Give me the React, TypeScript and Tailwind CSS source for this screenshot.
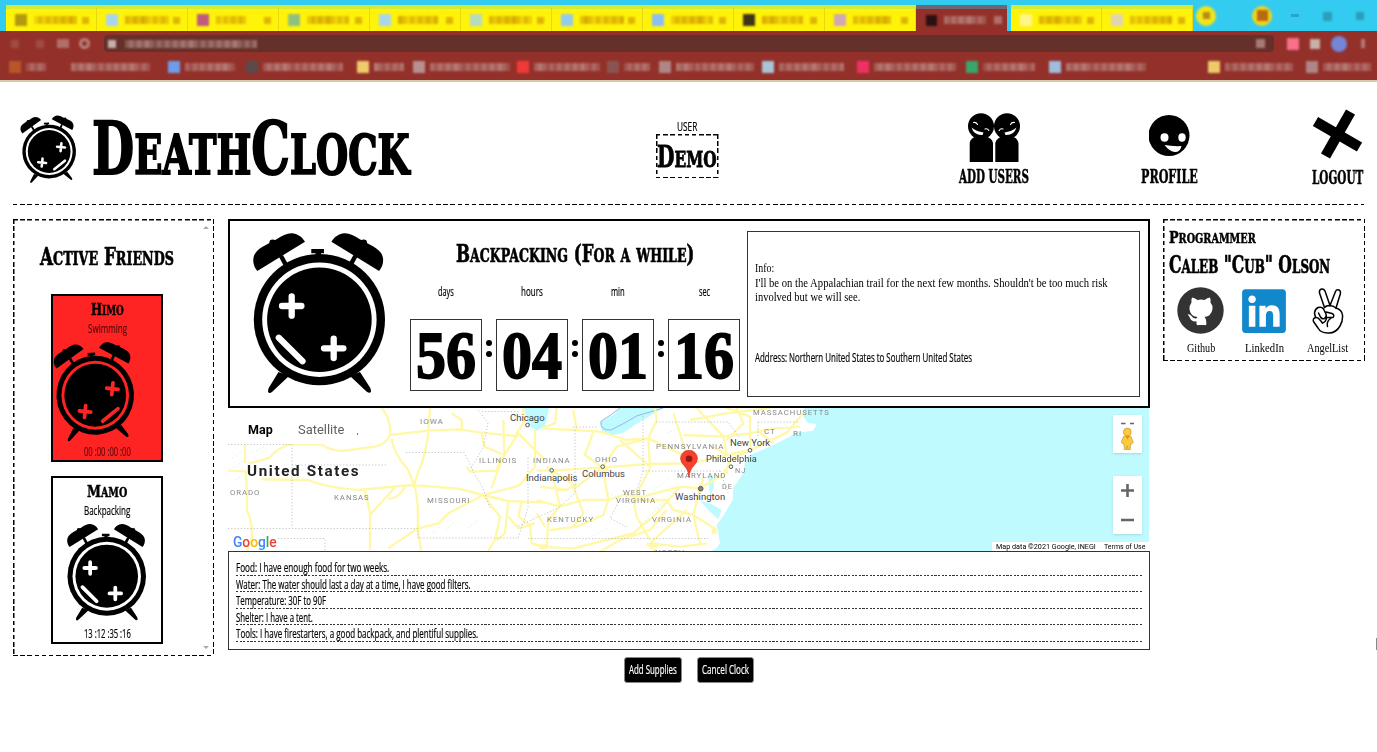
import React, { useLayoutEffect, useRef, useState } from "react";
import { FaLinkedin } from "react-icons/fa";

const slab = "font-['DejaVu_Serif','Liberation_Serif',serif] font-bold [-webkit-text-stroke:0.028em_currentColor]";
const body = "font-['Open_Sans','Liberation_Sans',sans-serif] [-webkit-text-stroke:0.2px_currentColor]";
const book = "font-['Liberation_Serif',serif]";

/* Condenses a line of text to a given width. */
function Fit({ w, className = "", children }: { w: number; className?: string; children: React.ReactNode }) {
  const ref = useRef<HTMLSpanElement>(null);
  const [scale, setScale] = useState(1);
  useLayoutEffect(() => {
    if (ref.current) setScale(w / ref.current.offsetWidth);
  }, [w]);
  return (
    <div className={"shrink-0 whitespace-nowrap " + className} style={{ width: w }}>
      <span ref={ref} className="inline-block origin-left" style={{ transform: `scaleX(${scale})` }}>
        {children}
      </span>
    </div>
  );
}

/* Capitals with the lower-case letters set as smaller capitals. */
function Caps({ text }: { text: string }) {
  const runs = text.match(/[a-z]+|[^a-z]+/g) || [];
  return (
    <>
      {runs.map((r, i) =>
        /[a-z]/.test(r) ? (
          <span key={i} className="text-[0.76em] leading-none uppercase">{r}</span>
        ) : (
          <span key={i}>{r}</span>
        )
      )}
    </>
  );
}

const dashBox =
  "bg-no-repeat bg-[repeating-linear-gradient(90deg,#000_0_4.5px,transparent_4.5px_7.17px),repeating-linear-gradient(90deg,#000_0_4.5px,transparent_4.5px_7.17px),repeating-linear-gradient(180deg,#000_0_4.5px,transparent_4.5px_7.17px),repeating-linear-gradient(180deg,#000_0_4.5px,transparent_4.5px_7.17px)] [background-size:100%_1.5px,100%_1.5px,1.5px_100%,1.5px_100%] [background-position:0_0,0_100%,0_0,100%_0]";

function Bell() {
  return (
    <g>
      <path d="M4.3 38C1.5 34.500 0 31 .3 26C.6 21 4 17 10 13.500L24 6C29 2.500 34 0 39 .2C44 .5 49 3.500 52 8.700Z" />
      <circle cx="19.700" cy="10" r="3.400" />
      <path d="M28 23L34 34" stroke="#000" strokeWidth="4.500" />
    </g>
  );
}

function Clock({ paper, className, flip = false, body: b = 0, face = 0 }: { paper: string; className: string; flip?: boolean; body?: number; face?: number }) {
  return (
    <svg viewBox="0 0 132 161" className={"block shrink-0 overflow-visible " + className} preserveAspectRatio="none">
      <g transform={`rotate(${b} 66 87)`}>
        <Bell />
        <g transform="translate(130.400 0) scale(-1 1)"><Bell /></g>
        <path d="M58.300 16H71V20.300H58.300ZM62.500 19H68V24H62.500Z" />
        <path d="M25.500 139L36 143L19.500 158.500Q16 161.500 15 158.500Q15 156 16 154.500Z" />
        <path d="M107 139L97 143L113.500 158.500Q117 161 118 158.500Q118 156 117 154.500Z" />
        <circle cx="66.400" cy="86.700" r="65.600" />
      </g>
      <circle cx="66.400" cy="86.700" r="57.200" fill={paper} />
      <circle cx="66.400" cy="86.700" r="52.300" />
      <g transform={`rotate(${face} 66.400 86.700) ${flip ? "translate(132.800 0) scale(-1 1)" : ""}`} stroke={paper} strokeWidth="6.300" strokeLinecap="round">
        <path d="M29 73H48.400M38.700 63.300V82.700M71 115.300H90.400M80.700 105.600V125M25.800 104.800L49.500 128.200" />
      </g>
    </svg>
  );
}

/* Obscured browser text: a strip of soft cells. */
function Mosaic({ w, tone, seed }: { w: number; tone: "gold" | "rose"; seed: number }) {
  const n = Math.max(2, Math.round(w / 4));
  return (
    <div className="flex h-[8px] shrink-0 overflow-hidden blur-[1px]" style={{ width: w }}>
      {Array.from({ length: n }, (_, i) => {
        const v = ((i * 7 + seed * 13) * 37) % 11;
        return (
          <div
            key={i}
            className={tone === "gold" ? "h-full flex-1 bg-[#c98a00]" : "h-full flex-1 bg-[#c39a95]"}
            style={{ opacity: 0.3 + v * 0.04 }}
          />
        );
      })}
    </div>
  );
}

const tabs = [
  { c: "bg-[#b29a10]", w: 43 },
  { c: "bg-[#a9d5ee]", w: 44 },
  { c: "bg-[#c05a80]", w: 30 },
  { c: "bg-[#8fc080]", w: 42 },
  { c: "bg-[#a9d5ee]", w: 40 },
  { c: "bg-[#b5dbc0]", w: 43 },
  { c: "bg-[#93cbee]", w: 44 },
  { c: "bg-[#8abef5]", w: 42 },
  { c: "bg-[#3d3515]", w: 41 },
  { c: "bg-[#d0a8b5]", w: 38 },
];

const marks = [
  { x: 9, c: "bg-[#b8552a]", w: 20 },
  { x: 54, c: "bg-transparent", w: 79 },
  { x: 168, c: "bg-[#6f9cea]", w: 50 },
  { x: 246, c: "bg-[#5a4a4a]", w: 80 },
  { x: 357, c: "bg-[#eecb6a]", w: 30 },
  { x: 413, c: "bg-[#b89090]", w: 80 },
  { x: 517, c: "bg-[#f03a3a]", w: 66 },
  { x: 607, c: "bg-[#8a5550]", w: 26 },
  { x: 659, c: "bg-[#b08585]", w: 78 },
  { x: 762, c: "bg-[#a9c5d5]", w: 65 },
  { x: 857, c: "bg-[#ef3060]", w: 82 },
  { x: 966, c: "bg-[#3aa66a]", w: 52 },
  { x: 1049, c: "bg-[#a0bde0]", w: 80 },
  { x: 1208, c: "bg-[#eecb6a]", w: 68 },
  { x: 1306, c: "bg-[#b08585]", w: 48 },
];

function Tab({ c, w, i }: { c: string; w: number; i: number }) {
  return (
    <div className="flex h-[26px] w-[91px] shrink-0 items-center border-t-4 border-r border-t-[#d4ec38] border-r-[#e8d810] bg-[#fff30a] pl-[9px]">
      <div className={"mr-[7px] size-[12px] blur-[1px] " + c} />
      <Mosaic w={w} tone="gold" seed={i} />
      <div className="mr-[7px] ml-auto size-[7px] bg-[#c98a00]/60 blur-[1px]" />
    </div>
  );
}

function Browser() {
  return (
    <div className="h-[82px] overflow-hidden bg-[#94302a]">
      <div className="flex h-[31px] items-end bg-[#33ccf0] pl-[6px]">
        {tabs.map((t, i) => <Tab key={i} c={t.c} w={t.w} i={i} />)}
        <div className="flex h-[26px] w-[91px] shrink-0 items-center border-t-4 border-t-[#6f6870] bg-[#94302a] pl-[10px]">
          <div className="mr-[7px] size-[11px] bg-[#2a1010] blur-[1px]" />
          <Mosaic w={42} tone="rose" seed={5} />
          <div className="ml-[8px] size-[8px] bg-[#c39a95]/60 blur-[1px]" />
        </div>
        <div className="ml-[4px] flex">
          <Tab c="bg-[#fff68a]" w={43} i={12} />
          <Tab c="bg-[#e0d5b0]" w={42} i={13} />
        </div>
        <div className="ml-[3px] flex size-[20px] shrink-0 items-center justify-center self-center rounded-full bg-[#f2e41a] blur-[1px]"><div className="size-[7px] bg-[#b88a10]" /></div>
        <div className="ml-[36px] flex size-[20px] shrink-0 items-center justify-center self-center rounded-full bg-[#f2d41a] blur-[1px]"><div className="size-[11px] bg-[#b86a10]" /></div>
        <div className="mb-[14px] ml-[19px] h-[3px] w-[8px] bg-[#2794ab]/70 blur-[0.5px]" />
        <div className="mb-[10px] ml-[24px] size-[9px] bg-[#2794ab]/80 blur-[1px]" />
        <div className="mb-[11px] ml-[24px] size-[8px] bg-[#2794ab]/80 blur-[1px]" />
      </div>
      <div className="flex h-[25px] items-center pl-[11px]">
        <div className="h-[8px] w-[8px] bg-[#c39a95]/25 blur-[1px]" />
        <div className="ml-[17px] h-[8px] w-[8px] bg-[#c39a95]/25 blur-[1px]" />
        <div className="ml-[13px] h-[9px] w-[12px] bg-[#c39a95]/60 blur-[1px]" />
        <div className="ml-[10px] size-[11px] rounded-full border-3 border-[#b8827c] blur-[1px]" />
        <div className="ml-[14px] flex h-[17px] w-[1170px] items-center rounded-sm bg-[#66302a] pl-[4px]">
          <div className="size-[8px] bg-[#e0cfcc]/80 blur-[1px]" />
          <div className="w-[9px]" />
          <Mosaic w={132} tone="rose" seed={3} />
          <div className="mr-[9px] ml-auto size-[9px] bg-[#c39a95]/70 blur-[1px]" />
        </div>
        <div className="ml-[13px] size-[12px] bg-[#f8708a] blur-[1px]" />
        <div className="ml-[11px] size-[10px] bg-[#c9b0a8] blur-[1px]" />
        <div className="ml-[11px] size-[16px] rounded-full bg-[#7585d8] blur-[1px]" />
        <div className="ml-[14px] h-[9px] w-[4px] bg-[#c39a95]/70 blur-[1px]" />
      </div>
      <div className="relative h-[24px]">
        {marks.map((m, i) => (
          <div key={i} className="absolute top-[5px] flex items-center" style={{ left: m.x }}>
            <div className={"mr-[5px] size-[12px] blur-[1px] " + m.c} />
            <Mosaic w={m.w} tone="rose" seed={i} />
          </div>
        ))}
      </div>
      <div className="h-[2px] bg-[#d8c8ac]" />
    </div>
  );
}

function Header() {
  return (
    <header className="mx-[13px] flex h-[123px] items-start bg-[repeating-linear-gradient(90deg,#000_0_4.5px,transparent_4.5px_7.17px)] bg-bottom bg-no-repeat [background-size:100%_1.5px]">
      <Clock paper="#fff" className="mt-[34px] ml-[9px] h-[66px] w-[54px]" flip body={-4} face={6} />
      <Fit w={318} className={"mt-[37px] ml-[16px] text-[72px] leading-[60px] " + slab}><Caps text="DeathClock" /></Fit>
      <div className="mt-[37px] ml-[246px] flex w-[62px] shrink-0 flex-col items-center">
        <Fit w={20} className={"text-[12px] leading-[15px] " + body}>USER</Fit>
        <div className={"flex h-[44px] w-[63px] items-center justify-center " + dashBox}>
          <Fit w={60} className={"pt-[2px] text-[30px] leading-[40px] " + slab}><Caps text="Demo" /></Fit>
        </div>
      </div>
      <div className="mt-[31px] ml-[241px] flex w-[70px] shrink-0 flex-col items-center">
        <svg viewBox="0 0 52 49" className="h-[49px] w-[52px]">
          <circle cx="13" cy="13.300" r="13" />
          <circle cx="39" cy="13.300" r="13" />
          <path d="M1.700 49V30Q2.500 24.500 9 23.500H17Q24 24.500 25 30V49ZM27.300 49V30Q28.500 24.500 35 23.500H43Q49.500 24.500 50.500 30V49Z" />
          <g fill="#fff">
            <path d="M3.500 14.500Q8 18.500 15.500 19.500L14.500 22Q6 22.500 3.500 14.500Z" />
            <path d="M48.500 14.500Q44 18.500 36.500 19.500L37.500 22Q46 22.500 48.500 14.500Z" />
          </g>
          <g fill="none" stroke="#fff" strokeWidth="1.100" strokeLinecap="round">
            <path d="M5.500 9.500Q8 8.800 9.500 11.500M17 16Q19.500 15 20.800 17.500M46.500 9.500Q44 8.800 42.500 11.500M35 16Q32.500 15 31.200 17.500" />
          </g>
        </svg>
        <Fit w={70} className={"mt-[5px] text-[18px] leading-[20px] " + slab}>ADD USERS</Fit>
      </div>
      <div className="mt-[33px] ml-[112px] flex w-[57px] shrink-0 flex-col items-center">
        <svg viewBox="0 0 42 42" className="h-[42px] w-[42px]">
          <circle cx="20" cy="20.500" r="20.500" />
          <ellipse cx="15.500" cy="22.500" rx="4" ry="4.200" fill="#fff" />
          <ellipse cx="33" cy="22.500" rx="3.700" ry="4.200" fill="#fff" />
          <path d="M15.500 30Q24 31.500 32.500 31Q31 37.500 25.500 37Q20 36 15.500 30Z" fill="#fff" />
        </svg>
        <Fit w={57} className={"mt-[10px] text-[18px] leading-[20px] " + slab}>PROFILE</Fit>
      </div>
      <div className="mt-[27px] ml-[114px] flex w-[51px] shrink-0 flex-col items-center">
        <svg viewBox="0 0 51 51" className="h-[51px] w-[51px] overflow-visible" stroke="#000" strokeWidth="10.400">
          <path d="M38.500 3.000L13.500 47" />
          <path d="M3.500 12.500L47.500 38" />
        </svg>
        <Fit w={51} className={"mt-[8px] text-[18px] leading-[20px] " + slab}>LOGOUT</Fit>
      </div>
    </header>
  );
}

function Friends() {
  return (
    <aside className={"flex h-[437px] w-[201px] shrink-0 justify-between " + dashBox}>
      <div className="ml-[27px] w-[134px]">
        <Fit w={134} className={"mt-[24px] text-[24px] leading-[28px] " + slab}><Caps text="Active Friends" /></Fit>
        <div className="mt-[23px] ml-[11px] flex h-[168px] w-[112px] flex-col items-center border-2 border-black bg-[#ff2424]">
          <Fit w={33} className={"mt-[5px] text-[17px] leading-[16px] " + slab}><Caps text="Himo" /></Fit>
          <Fit w={39} className={"mt-[3px] text-[12px] leading-[16px] text-[#5a0a0a] " + body}>Swimming</Fit>
          <Clock paper="#ff2424" className="mt-[6px] ml-[3px] h-[97px] w-[78px] self-start" flip body={-4} face={6} />
          <Fit w={47} className={"mt-[4px] text-[12px] leading-[16px] text-[#5a0a0a] " + body}>00 :00 :00 :00</Fit>
        </div>
        <div className="mt-[14px] ml-[11px] flex h-[168px] w-[112px] flex-col items-center border-2 border-black">
          <Fit w={40} className={"mt-[5px] text-[17px] leading-[16px] " + slab}><Caps text="Mamo" /></Fit>
          <Fit w={46} className={"mt-[3px] text-[12px] leading-[16px] " + body}>Backpacking</Fit>
          <Clock paper="#fff" className="mt-[5px] mr-[2px] h-[97px] w-[79px]" />
          <Fit w={47} className={"mt-[5px] text-[12px] leading-[16px] " + body}>13 :12 :35 :16</Fit>
        </div>
      </div>
      <div className="mr-[5px] flex w-[6px] flex-col justify-between py-[6px]">
        <svg viewBox="0 0 6 4" className="h-[4px] w-[6px]" fill="#aaa"><path d="M0 4L3 1L6 4Z" /></svg>
        <svg viewBox="0 0 6 4" className="h-[4px] w-[6px]" fill="#aaa"><path d="M0 0L3 3L6 0Z" /></svg>
      </div>
    </aside>
  );
}

function Unit({ label, w, value }: { label: string; w: number; value: string }) {
  return (
    <div className="flex w-[72px] flex-col items-center">
      <Fit w={w} className={"text-[12px] leading-[16px] " + body}>{label}</Fit>
      <div className="mt-[19px] flex h-[72px] w-[72px] items-center justify-center border border-[#333]">
        <Fit w={60} className="text-[68px] leading-[72px] font-bold font-['Liberation_Serif',serif] [-webkit-text-stroke:1.800px_#000]">{value}</Fit>
      </div>
    </div>
  );
}

function Colon() {
  return (
    <div className="mt-[56px] flex w-[14px] flex-col items-center gap-[5px]">
      <div className="size-[6px] rounded-full bg-black" />
      <div className="size-[6px] rounded-full bg-black" />
    </div>
  );
}

function Label({ x, y, w, size = "text-[8px]", className = "text-[#8a8a8a]", children }: { x: number; y: number; w: number; size?: string; className?: string; children: string }) {
  return (
    <div className="absolute" style={{ left: x - 228, top: y - 408 - 7 }}>
      <Fit w={w} className={"leading-[14px] font-['Roboto',sans-serif] " + size + " " + className}>{children}</Fit>
    </div>
  );
}

const city = "text-[#444]";
const state = "text-[#888] tracking-[1px]";

function MapPanel() {
  return (
    <div className="relative h-[143px] w-[921px] overflow-hidden bg-white">
      <svg viewBox="0 0 921 143" className="block h-[143px] w-[921px]" fill="none">
        <g transform="translate(312 -8) scale(.33333)">
          <path fill="#bffaff" d="M795 20L790 50L805 70L830 72L820 92L770 98L735 118L690 140L630 165L615 178L612 215L590 250L580 262L578 300L548 350L530 375L535 400L540 430L530 445L495 462H1840V20Z" />
          <path fill="#bffaff" d="M240 20L225 42L180 66L185 92L212 107L250 98L290 72L375 20ZM-50 20L-32 80L-8 92L15 78L28 20ZM505 235L520 225L522 262L510 290ZM480 302L515 312L545 330L535 358L510 335Z" />
          <path stroke="#98b5ea" strokeWidth="3" d="M240 24Q215 44 183 64Q180 92 213 90Q250 72 290 48L370 24" />
        </g>
        <g transform="translate(-3 -8) scale(.33333)" stroke="#fff8a8" strokeWidth="7" strokeLinejoin="round">
          <path d="M470 24Q500 60 495 105Q480 135 450 140L350 153Q310 150 290 133H190Q150 150 135 172Q100 185 70 190M10 212L62 214Q68 300 65 330Q85 370 80 420L66 452M60 130V190M495 105L610 92L700 88L770 98L870 108L900 60L893 24M615 24L610 92Q605 160 580 215L567 255M500 115Q505 160 550 210L567 255M110 238L250 240Q300 262 400 270L560 255L700 266L775 285L850 303L960 308M420 270L435 340V450M510 262L435 345M540 262Q520 295 490 297M567 255Q582 300 578 385L588 452M490 445L578 385L640 370L670 340L775 285L880 258L930 200L930 90M775 285Q800 320 825 350L810 420L790 452M835 60L838 165L815 220L800 265M725 200L735 215L815 212L828 170M680 40L710 60V88M770 98L778 140L838 165L880 100L960 180M850 303L840 400L815 420M850 350L880 385L930 370M890 306L880 350L915 375L920 430L950 440M935 340L960 380" />
        </g>
        <g transform="translate(312 -8) scale(.33333)" stroke="#fff8a8" strokeWidth="7" strokeLinejoin="round">
          <path d="M-10 212L35 212L188 202L330 192L450 190L560 165L630 150L740 98L790 40M5 85L100 90L180 95L260 120L325 115L330 205L280 300L290 350L330 420M160 95L135 165L188 202L110 260L20 200M188 202L230 140L325 115L420 160L440 170M325 115L350 60L345 24M240 120L330 200M400 40L420 100L440 170M430 105L550 110L630 100L700 85L780 80M470 24L550 110L560 165M560 24L630 50V150M650 90L700 130M450 60L560 40L690 24M188 202L205 300L190 345L110 380L30 390M205 300L250 285L310 290L420 260L480 265L555 220L570 180L630 150M35 212L60 320L25 360L20 440M-10 300L60 320L130 300L205 300M0 260L80 270L110 250M280 300L380 300L400 330L460 345L480 430M380 330L330 390L240 420L180 455M480 265L460 345L530 390M420 260L350 340L280 400L200 420L100 445L0 440M480 265L490 235M440 330L330 430L420 440L500 430M320 430L350 455M590 24L610 70L560 120M520 140L560 165M100 30L110 90M50 24L45 70L5 85M100 260L130 340L100 380" />
          <g strokeWidth="14"><path d="M-2 440H20M330 435H355M515 395H530M475 263H490M550 215H565M185 207H205" /></g>
        </g>
        <g stroke="#b5b5b5" strokeWidth=".8" strokeDasharray="1.200 2">
          <path d="M0 36.500H64V120M0 120.500H190V130H290M50 130.500H97V143M64 57H160M178 44.500H236L245 62M250 2L260 15L255 40L243 60L255 80L262 100M254 3.500H290M300 50V100L290 130M300 130.500H480M347 22V85M345 19H370M415 8V63H492M428 14H500L512 30M415 63L410 80L390 95L382 110L400 120M492 63L500 85M530 14H570M530 14V30M290 118L330 100L347 85" />
        </g>
        <g stroke="#bfeecb" strokeWidth=".8" strokeDasharray="1 2.500">
          <path d="M4 50L16 42M5 60L17 52M8 72L14 68M25 44L38 38M218 122L226 114M240 120L250 112M205 125L212 118M440 70L420 88M450 75L425 105M435 95L410 120M380 120L350 135M440 25L452 20M380 85L400 95" />
        </g>
        <g fill="#fff" stroke="#555" strokeWidth="1">
          <circle cx="299.500" cy="17" r="1.800" /><circle cx="323.700" cy="62.300" r="1.800" /><circle cx="374.700" cy="58.700" r="1.800" /><circle cx="522" cy="42.300" r="1.800" /><circle cx="503" cy="58.700" r="1.800" /><circle cx="472.700" cy="80.700" r="2.300" fill="#888" />
        </g>
      </svg>
      <div className="absolute top-[5px] left-[10px] h-[31px] w-[119px] bg-white" />
      <div className="absolute top-[25px] left-[129px] h-[2px] w-px bg-[#777]" />
      <Label x={248} y={429} w={25} size="text-[13.500px]" className="text-black font-bold">Map</Label>
      <Label x={298} y={429} w={46} size="text-[13.500px]" className="text-[#606060]">Satellite</Label>
      <Label x={247} y={471} w={113} size="text-[14px]" className="text-[#222] font-bold tracking-[1.500px]">United States</Label>
      <Label x={420} y={422} w={24} className={state}>IOWA</Label>
      <Label x={479} y={461} w={38} className={state}>ILLINOIS</Label>
      <Label x={533} y={461} w={38} className={state}>INDIANA</Label>
      <Label x={595} y={460} w={23} className={state}>OHIO</Label>
      <Label x={230} y={493} w={30} className={state}>ORADO</Label>
      <Label x={334} y={498} w={36} className={state}>KANSAS</Label>
      <Label x={427} y={501} w={43} className={state}>MISSOURI</Label>
      <Label x={547} y={520} w={47} className={state}>KENTUCKY</Label>
      <Label x={623} y={493} w={24} className={state}>WEST</Label>
      <Label x={616} y={501} w={40} className={state}>VIRGINIA</Label>
      <Label x={652} y={520} w={40} className={state}>VIRGINIA</Label>
      <Label x={655} y={553} w={30} className={state}>NORTH</Label>
      <Label x={656} y={447} w={68} className={state}>PENNSYLVANIA</Label>
      <Label x={677} y={476} w={49} className={state}>MARYLAND</Label>
      <Label x={753} y={413} w={77} className={state}>MASSACHUSETTS</Label>
      <Label x={764} y={432} w={12} className={state}>CT</Label>
      <Label x={793} y={434} w={9} className={state}>RI</Label>
      <Label x={735} y={471} w={11} className={state}>NJ</Label>
      <Label x={722} y={487} w={11} className={state}>DE</Label>
      <Label x={510} y={418} w={35} size="text-[9.500px]" className={city}>Chicago</Label>
      <Label x={526} y={478} w={51} size="text-[9.500px]" className={city}>Indianapolis</Label>
      <Label x={582} y={474} w={43} size="text-[9.500px]" className={city}>Columbus</Label>
      <Label x={730} y={443} w={40} size="text-[9.500px]" className={city}>New York</Label>
      <Label x={706} y={459} w={51} size="text-[9.500px]" className={city}>Philadelphia</Label>
      <Label x={675} y={497} w={50} size="text-[9.500px]" className={city}>Washington</Label>
      <svg viewBox="0 0 18 28" className="absolute top-[42px] left-[452px] h-[28px] w-[18px]">
        <path d="M9 27.500Q8.600 20 4 15.500Q.5 12 .5 8.500A8.500 8.300 0 0 1 17.500 8.500Q17.500 12 14 15.500Q9.400 20 9 27.500Z" fill="#f8402f" stroke="#d02818" strokeWidth=".6" />
        <circle cx="9" cy="8.700" r="3.300" fill="#8c1c14" />
      </svg>
      <div className="absolute top-[125px] left-[5px]">
        <Fit w={44} className="text-[15px] leading-[18px] font-medium font-['Roboto',sans-serif]">
          <span className="text-[#4285f4]">G</span><span className="text-[#ea4335]">o</span><span className="text-[#fbbc05]">o</span><span className="text-[#4285f4]">g</span><span className="text-[#34a853]">l</span><span className="text-[#ea4335]">e</span>
        </Fit>
      </div>
      <svg viewBox="0 0 29 38" className="absolute top-[7px] left-[885px] h-[38px] w-[29px] bg-white shadow-sm">
        <path d="M8 8.500H12.500M17 8.500H21" stroke="#666" strokeWidth="1.300" />
        <g fill="#fbcb3a" stroke="#b98a30" strokeWidth=".6">
          <path d="M10.500 21.500Q14.500 19.500 18 21.500L20.300 27.500L18.500 29L17.500 29L17.300 34.500H14.700V31H14V34.500H11.300L11 29L10.200 29L8.300 27.500Z" />
          <circle cx="14.300" cy="17" r="3.900" />
        </g>
        <path d="M12.500 21H16.500L14.500 24.500Z" fill="#ee8822" />
      </svg>
      <svg viewBox="0 0 29 58" className="absolute top-[68px] left-[885px] h-[58px] w-[29px] bg-white shadow-sm">
        <path d="M8 14.500H21M14.500 8V21M8 44H21" stroke="#666" strokeWidth="2.600" />
      </svg>
      <div className="absolute right-0 bottom-0 flex h-[9px] w-[157px] items-center justify-between bg-white pr-[4px] pl-[4px] text-[7.500px] leading-[9px] text-black font-['Roboto',sans-serif]">
        <Fit w={100}>Map data ©2021 Google, INEGI</Fit>
        <Fit w={41}>Terms of Use</Fit>
      </div>
    </div>
  );
}

const supplies = [
  { t: "Food: I have enough food for two weeks.", w: 153 },
  { t: "Water: The water should last a day at a time, I have good filters.", w: 235 },
  { t: "Temperature: 30F to 90F", w: 90 },
  { t: "Shelter: I have a tent.", w: 77 },
  { t: "Tools: I have firestarters, a good backpack, and plentiful supplies.", w: 242 },
];

function Center() {
  return (
    <section className="ml-[14px] flex w-[922px] shrink-0 flex-col">
      <div className="flex h-[189px] border-2 border-black">
        <Clock paper="#fff" className="mt-[12px] ml-[23px] h-[161px] w-[132px]" />
        <div className="ml-[25px] w-[330px] shrink-0">
          <Fit w={238} className={"mt-[19px] ml-[46px] text-[24px] leading-[28px] " + slab}><Caps text="Backpacking (For a while)" /></Fit>
          <div className="mt-[16px] flex">
            <Unit label="days" w={16} value="56" />
            <Colon />
            <Unit label="hours" w={22} value="04" />
            <Colon />
            <Unit label="min" w={14} value="01" />
            <Colon />
            <Unit label="sec" w={11} value="16" />
          </div>
        </div>
        <div className="mt-[10px] ml-[7px] h-[166px] w-[393px] shrink-0 border border-[#333] pt-[29px] pl-[7px]">
          <div className={"text-[12px] leading-[14.500px] " + book}>
            <Fit w={19}>Info:</Fit>
            <Fit w={353}>I'll be on the Appalachian trail for the next few months. Shouldn't be too much risk</Fit>
            <Fit w={105}>involved but we will see.</Fit>
          </div>
          <Fit w={217} className={"mt-[44px] text-[12px] leading-[18px] " + body}>Address: Northern United States to Southern United States</Fit>
        </div>
      </div>
      <MapPanel />
      <div className="h-[99px] border border-[#333] px-[7px] pt-[7px]">
        {supplies.map((s) => (
          <div key={s.t} className="h-[16.550px] bg-[repeating-linear-gradient(90deg,#333_0_2.2px,transparent_2.2px_3.6px)] bg-bottom bg-no-repeat [background-size:100%_1px]">
            <Fit w={s.w} className={"text-[12px] leading-[17px] " + body}>{s.t}</Fit>
          </div>
        ))}
      </div>
      <div className="mt-[7px] flex gap-[15px] pl-[396px]">
        <button className="flex h-[26px] w-[58px] items-center justify-center rounded-[3px] border border-[#888] bg-black text-white">
          <Fit w={48} className={"text-[12px] leading-[16px] " + body}>Add Supplies</Fit>
        </button>
        <button className="flex h-[26px] w-[57px] items-center justify-center rounded-[3px] border border-[#888] bg-black text-white">
          <Fit w={47} className={"text-[12px] leading-[16px] " + body}>Cancel Clock</Fit>
        </button>
      </div>
    </section>
  );
}

function Programmer() {
  return (
    <aside className={"ml-[13px] h-[142px] w-[202px] shrink-0 " + dashBox}>
      <div className="pt-[8px] pl-[6px]">
        <Fit w={87} className={"text-[17px] leading-[20px] " + slab}><Caps text="Programmer" /></Fit>
        <Fit w={161} className={"mt-[4px] text-[25px] leading-[28px] " + slab}><Caps text={'Caleb "Cub" Olson'} /></Fit>
        <div className="mt-[8px] flex">
          <div className="flex w-[63px] flex-col items-center">
            <svg viewBox="0 0 47 47" className="size-[47px]">
              <circle cx="23.500" cy="23.500" r="23.200" fill="#333" />
              <path fill="#fff" d="M15 10.500Q17.500 10.500 20.500 13Q23.500 12.200 27.500 13Q30.500 10.500 33 10.500Q34 13 33.500 15.500Q36 18.500 35.500 22Q34.500 29 27.500 30Q29.500 32 29.300 35V37.500Q29 38.500 27 38H22Q19.500 38.500 19.500 37V34.300Q14.500 35 13 31Q12 28.500 10.700 27.500Q12.500 26.500 14.500 29Q17 32.500 19.700 31.300Q19.800 30.500 20.500 30Q13 29 12.500 22Q12.300 18.500 14.500 15.500Q14 13 15 10.500Z" />
            </svg>
            <Fit w={28} className={"mt-[7px] text-[12px] leading-[14px] " + book}>Github</Fit>
          </div>
          <div className="flex w-[64px] flex-col items-center">
            <FaLinkedin className="-mt-[1px] h-[50px] w-[50px] text-[#1188cc]" />
            <Fit w={39} className={"mt-[5px] text-[12px] leading-[14px] " + book}>LinkedIn</Fit>
          </div>
          <div className="flex w-[63px] flex-col items-center">
            <svg viewBox="0 0 32 46" className="mt-[1px] h-[46px] w-[32px]" fill="none" stroke="#000" strokeWidth="1.500" strokeLinecap="round" strokeLinejoin="round">
              <path d="M12.500 19.500L7.500 5Q7 1.500 9.500 1Q12 .7 13 3L18 17.500M18 17.500L23.500 3.500Q24.500 1 27 2Q29 3 28.300 6L24 20" />
              <path d="M24 20Q30 22 30.500 27Q31 33 28 38Q24 45 17 45Q9 45.500 6 40L1.500 33.500Q.5 30.500 3.500 29.500Q6 29 8 32L10.500 35" />
              <path d="M3.500 29.500L2.500 25Q3 21 6 19.500Q10 18.500 11.500 21L14 26Q15 29 12.500 30.500Q10 31.500 8.500 29L6.500 25M12.500 19.500Q14 17.500 18 17.500Q22 18 24 20M14 24L20 25.500Q23 27 21 29.500L15 29.500M10.500 35Q14 34 14.500 30M19 30Q14 34 15.500 38.500" />
            </svg>
            <Fit w={41} className={"mt-[7px] text-[12px] leading-[14px] " + book}>AngelList</Fit>
          </div>
        </div>
      </div>
    </aside>
  );
}

export default function App() {
  return (
    <div className="relative h-[752px] w-[1377px] overflow-hidden bg-white text-black">
      <Browser />
      <Header />
      <main className="flex items-start pt-[14px] pl-[13px]">
        <Friends />
        <Center />
        <Programmer />
      </main>
      <div className="absolute top-[638px] right-0 h-[12px] w-px bg-[#888]" />
    </div>
  );
}
